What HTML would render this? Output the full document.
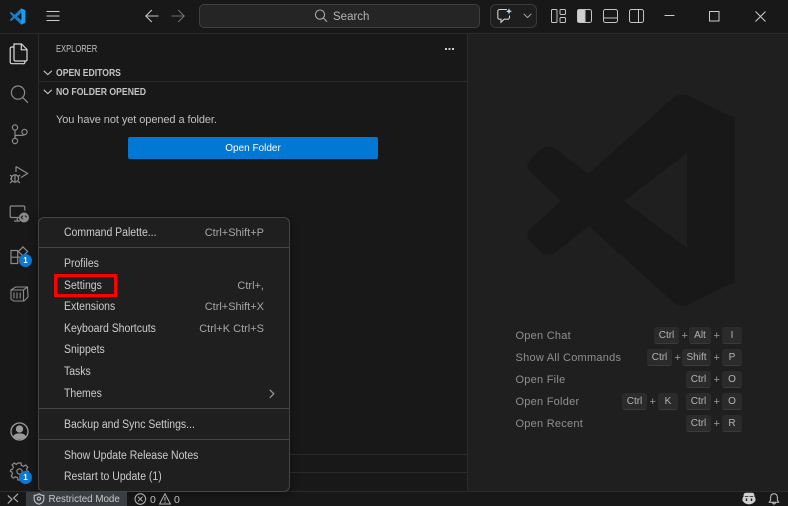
<!DOCTYPE html>
<html><head><meta charset="utf-8"><style>
html,body{margin:0;padding:0;width:788px;height:506px;overflow:hidden;background:#181818}
body{position:relative;font-family:"Liberation Sans",sans-serif;font-size:11.5px;color:#ccc}
.a{position:absolute;white-space:nowrap}
.h{transform-origin:left center}
.m{position:absolute;white-space:nowrap;left:64px;color:#cccccc;font-size:11.5px;line-height:14px;transform:scaleX(.91);transform-origin:left center;margin-top:1px}
.k{position:absolute;white-space:nowrap;right:524px;color:#a6a6a6;font-size:11px;line-height:14px;margin-top:1px}
.s{position:absolute;left:39px;width:251px;height:1px;background:#454545}
.w{position:absolute;left:515.5px;color:#8f8f8f;font-size:11px;line-height:14px;letter-spacing:.25px;white-space:nowrap;margin-top:1px}
.c{position:absolute;height:16px;line-height:18px;background:#2b2b2b;border-bottom:1px solid #3a3a3a;border-radius:3px;color:#b5b5b5;font-size:10px;text-align:center}
.p{position:absolute;color:#999;font-size:11px;line-height:18px}
svg{position:absolute;overflow:visible}
.b{position:absolute;width:13px;height:13px;border-radius:50%;background:#0a78d4;color:#fff;font-size:8px;font-weight:bold;line-height:13px;text-align:center}
</style></head><body>
<!-- regions -->
<div class="a" style="left:468px;top:34px;width:320px;height:457px;background:#1f1f1f"></div>
<div class="a" style="left:0;top:33px;width:788px;height:1px;background:#2b2b2b"></div>
<div class="a" style="left:38px;top:34px;width:1px;height:457px;background:#2b2b2b"></div>
<div class="a" style="left:467px;top:34px;width:1px;height:457px;background:#2b2b2b"></div>
<div class="a" style="left:39px;top:81px;width:428px;height:1px;background:#2b2b2b"></div>
<div class="a" style="left:290px;top:454px;width:177px;height:1px;background:#2b2b2b"></div>
<div class="a" style="left:290px;top:472px;width:177px;height:1px;background:#2b2b2b"></div>
<div class="a" style="left:0;top:491px;width:788px;height:1px;background:#2b2b2b"></div>

<!-- title bar -->
<svg style="left:9px;top:8px" width="17" height="17" viewBox="0 0 17 17"><path d="M12.2 .4 16.3 2.3V14.7L12.2 16.6 5.6 10.3 2.2 13 .6 12.1 3.9 8.5.6 4.9 2.2 4 5.6 6.7Z" fill="#0e82d2"/><path d="M12.2 .4 16.3 2.3V14.7L12.2 16.6Z" fill="#1f9cf0"/><path d="M12.4 4.9 8 8.5l4.4 3.6Z" fill="#181818"/></svg>
<svg style="left:46px;top:10px" width="14" height="12" fill="none" stroke="#ccc" stroke-width="1"><path d="M.5 1.5h13M.5 6h13M.5 10.5h13"/></svg>
<svg style="left:145px;top:9px" width="14" height="14" fill="none" stroke="#c4c4c4" stroke-width="1.1"><path d="M.8 7H13.5M6.8 1 .8 7l6 6"/></svg>
<svg style="left:171px;top:9px" width="14" height="14" fill="none" stroke="#6e6e6e" stroke-width="1.1"><path d="M13.2 7H.5M7.2 1l6 6-6 6"/></svg>
<div class="a" style="left:199px;top:4px;width:279px;height:22px;background:#252525;border:1px solid #3f3f3f;border-radius:5px"></div>
<svg style="left:314px;top:9px" width="14" height="14" fill="none" stroke="#aaa" stroke-width="1.1"><circle cx="6" cy="5.6" r="4.6"/><path d="M9.4 9 13 12.8"/></svg>
<div class="a" style="left:333px;top:9px;font-size:11.5px;line-height:16px;color:#b5b5b5">Search</div>
<div class="a" style="left:490px;top:4px;width:45px;height:22px;border:1px solid #3a3a3a;border-radius:6px;background:#1e1e1e"></div>
<svg style="left:496px;top:8px" width="18" height="16" fill="none" stroke="#d0d0d0" stroke-width="1.1"><path d="M11 1.5H3.5A1.7 1.7 0 0 0 1.8 3.2V9.5A1.7 1.7 0 0 0 3.5 11.2H5V14.2L8.3 11.2H11A2 2 0 0 0 13.5 9.5V7.5"/><path d="M13 .3 13.9 2.4 16 3.3 13.9 4.2 13 6.3 12.1 4.2 10 3.3 12.1 2.4Z" fill="#b8d8f0" stroke="none"/></svg>
<svg style="left:523px;top:13px" width="9" height="6" fill="none" stroke="#aaa" stroke-width="1"><path d="M.7.8 4.5 4.6 8.3.8"/></svg>
<svg style="left:551px;top:9px" width="15" height="14" fill="none" stroke="#c4c4c4" stroke-width="1"><rect x=".5" y=".5" width="5.5" height="13" rx="1"/><rect x="9" y=".5" width="5.5" height="5" rx="1"/><rect x="9" y="8.5" width="5.5" height="5" rx="1"/></svg>
<svg style="left:577px;top:9px" width="15" height="14" fill="none" stroke="#c4c4c4" stroke-width="1"><rect x=".5" y=".5" width="14" height="13" rx="2"/><path d="M.5 2.5a2 2 0 0 1 2-2H8v13H2.5a2 2 0 0 1-2-2Z" fill="#d0d0d0"/></svg>
<svg style="left:603px;top:9px" width="15" height="14" fill="none" stroke="#c4c4c4" stroke-width="1"><rect x=".5" y=".5" width="14" height="13" rx="2"/><path d="M.5 9h14"/></svg>
<svg style="left:629px;top:9px" width="15" height="14" fill="none" stroke="#c4c4c4" stroke-width="1"><rect x=".5" y=".5" width="14" height="13" rx="2"/><path d="M9.5.5v13"/></svg>
<svg style="left:664px;top:15px" width="11" height="2" stroke="#ccc" stroke-width="1"><path d="M.5 .5h10"/></svg>
<svg style="left:709px;top:11px" width="11" height="11" fill="none" stroke="#ccc" stroke-width="1"><rect x=".5" y=".5" width="9.5" height="9.5"/></svg>
<svg style="left:755px;top:11px" width="11" height="11" fill="none" stroke="#ccc" stroke-width="1"><path d="M.5.5 10.5 10.5M10.5.5 .5 10.5"/></svg>

<!-- activity bar -->
<svg style="left:9px;top:43px" width="20" height="22" fill="none" stroke="#d8d8d8" stroke-width="1.2"><path d="M5 1H12.5L18 6.5V16.5A1.3 1.3 0 0 1 16.7 18H6.3A1.3 1.3 0 0 1 5 16.5Z"/><path d="M12.3 1V6.8H18"/><path d="M5 4H2.7A1.5 1.5 0 0 0 1.2 5.5V19A1.7 1.7 0 0 0 2.9 20.7H14A1.5 1.5 0 0 0 15.5 18.2"/></svg>
<svg style="left:10px;top:85px" width="19" height="19" fill="none" stroke="#8b8b8b" stroke-width="1.2"><circle cx="8" cy="7.6" r="6.6"/><path d="M12.6 12.4 18 17.8"/></svg>
<svg style="left:11px;top:124px" width="17" height="20" fill="none" stroke="#8b8b8b" stroke-width="1.2"><circle cx="4" cy="3.5" r="2.6"/><circle cx="4" cy="17" r="2.6"/><circle cx="13.5" cy="8" r="2.6"/><path d="M4 6V14.4M4 12.5C4 10 12.5 12.5 13.5 10.6"/></svg>
<svg style="left:9px;top:165px" width="20" height="21" fill="none" stroke="#8b8b8b" stroke-width="1.2"><path d="M7 1.5V7M7 1.5 18.5 8.5 12 12.5"/><circle cx="6" cy="13.5" r="3.6"/><path d="M1 10l2 1.6M1 14h1.5M1 18l2-1.6M11 10l-2 1.6M11 18l-2-1.6M6 10V17"/></svg>
<svg style="left:9px;top:205px" width="21" height="20" fill="none" stroke="#8b8b8b" stroke-width="1.2"><path d="M12 12.5H2.5A1.3 1.3 0 0 1 1.2 11.2V2.3A1.3 1.3 0 0 1 2.5 1H14.5A1.3 1.3 0 0 1 15.8 2.3V5.5M5 16H11M8.3 12.5V16"/><circle cx="15" cy="12.5" r="5" fill="#8b8b8b" stroke="none"/><path d="M14 10.6 12.2 12.4 14 14.2M16 10.6 17.8 12.4" stroke="#181818" stroke-width="1"/></svg>
<svg style="left:10px;top:246px" width="19" height="18" fill="none" stroke="#8b8b8b" stroke-width="1.2"><path d="M1 4.5H7.7V11.2H1ZM1 11.2H7.7V17.5H1ZM7.7 11.2H14V15"/><path d="M13 .9 17.6 5.5 13 10.1 8.4 5.5Z"/></svg>
<div class="b" style="left:19px;top:254px">1</div>
<svg style="left:10px;top:286px" width="19" height="16" fill="none" stroke="#8b8b8b" stroke-width="1.1"><path d="M1 4 5.5 1H17.5L18 11 14 15H3.5L1 13ZM1 4H13.5V15M13.5 4 17.5 1M4 6.5V12.5M7 6.5V12.5M10.2 6.5V12.5"/></svg>
<svg style="left:10px;top:422px" width="19" height="19" fill="none" stroke="#9a9a9a" stroke-width="1.3"><circle cx="9.5" cy="9.5" r="8.5"/><circle cx="9.5" cy="7" r="3" fill="#9a9a9a"/><path d="M3.8 14.5C5 11.2 14 11.2 15.2 14.5 13 17.2 6 17.2 3.8 14.5Z" fill="#9a9a9a"/></svg>
<svg style="left:10px;top:462px" width="19" height="19" fill="none" stroke="#8b8b8b" stroke-width="1.2"><path d="M8 1H11L11.5 3.4 13.6 4.3 15.7 3 17.8 5.1 16.5 7.2 17.4 9.3 18.5 9.5V11L16.5 12 15.6 14 17 16 15 18 12.8 16.7 11 17.5 10.5 18H8L7.5 15.7 5.4 14.8 3.3 16.1 1.2 14 2.5 11.9 1.6 9.8 0.5 9.5V8L2.5 7.2 3.4 5.1 2.1 3 4.2 1 6.2 2.4 7.5 1.5Z"/><circle cx="9.5" cy="9.5" r="2.6"/></svg>
<div class="b" style="left:19px;top:471px">1</div>

<!-- sidebar -->
<div class="a h" style="left:56px;top:43px;font-size:10.5px;line-height:13px;color:#c0c0c0;transform:scaleX(.72)">EXPLORER</div>
<div class="a" style="left:445px;top:47.5px;width:2px;height:2px;background:#ccc;box-shadow:3.5px 0 #ccc,7px 0 #ccc"></div>
<svg style="left:43px;top:70px" width="10" height="6" fill="none" stroke="#c4c4c4" stroke-width="1.1"><path d="M.8.8 4.8 4.6 8.8.8"/></svg>
<div class="a h" style="left:56px;top:67px;font-size:10.5px;font-weight:bold;line-height:13px;color:#c4c4c4;transform:scaleX(.82)">OPEN EDITORS</div>
<svg style="left:43px;top:89px" width="10" height="6" fill="none" stroke="#c4c4c4" stroke-width="1.1"><path d="M.8.8 4.8 4.6 8.8.8"/></svg>
<div class="a h" style="left:56px;top:86px;font-size:10.5px;font-weight:bold;line-height:13px;color:#c4c4c4;transform:scaleX(.825)">NO FOLDER OPENED</div>
<div class="a" style="left:56px;top:113px;font-size:11px;line-height:14px;color:#c0c0c0;letter-spacing:-.08px">You have not yet opened a folder.</div>
<div class="a" style="left:128px;top:137px;width:250px;height:22px;line-height:24px;background:#0078d4;border-radius:2px;color:#fff;font-size:10px;text-align:center">Open Folder</div>

<!-- watermark -->
<svg style="left:0;top:0" width="788" height="506"><path d="M674 97Q683 92 691 97L735 118V282L691 303Q683 309 674 303L589 226 556 252Q548 257 541 252L530 241Q525 235 530 229L561 201 530 172Q525 166 530 160L541 149Q548 144 556 149L588 174Z" fill="#181818"/><path d="M687 153 624 201 687 248Z" fill="#1f1f1f"/></svg>
<div class="w" style="top:328px">Open Chat</div>
<div class="w" style="top:350px">Show All Commands</div>
<div class="w" style="top:372px">Open File</div>
<div class="w" style="top:394px">Open Folder</div>
<div class="w" style="top:416px">Open Recent</div>
<div class="c" style="left:654px;top:327px;width:25px">Ctrl</div><div class="p" style="left:681.5px;top:327px">+</div><div class="c" style="left:689px;top:327px;width:22px">Alt</div><div class="p" style="left:713.5px;top:327px">+</div><div class="c" style="left:722px;top:327px;width:20px">I</div>
<div class="c" style="left:647px;top:349px;width:25px">Ctrl</div><div class="p" style="left:674.5px;top:349px">+</div><div class="c" style="left:682px;top:349px;width:29px">Shift</div><div class="p" style="left:713.5px;top:349px">+</div><div class="c" style="left:722px;top:349px;width:20px">P</div>
<div class="c" style="left:686px;top:371px;width:25px">Ctrl</div><div class="p" style="left:713.5px;top:371px">+</div><div class="c" style="left:722px;top:371px;width:20px">O</div>
<div class="c" style="left:622px;top:393px;width:25px">Ctrl</div><div class="p" style="left:649.5px;top:393px">+</div><div class="c" style="left:658px;top:393px;width:20px">K</div><div class="c" style="left:686px;top:393px;width:25px">Ctrl</div><div class="p" style="left:713.5px;top:393px">+</div><div class="c" style="left:722px;top:393px;width:20px">O</div>
<div class="c" style="left:686px;top:415px;width:25px">Ctrl</div><div class="p" style="left:713.5px;top:415px">+</div><div class="c" style="left:722px;top:415px;width:20px">R</div>

<!-- menu -->
<div class="a" style="left:38px;top:217px;width:250px;height:273px;background:#1f1f1f;border:1px solid #454545;border-radius:6px;box-shadow:0 2px 8px rgba(0,0,0,.36)"></div>
<div class="s" style="top:247px"></div><div class="s" style="top:408px"></div><div class="s" style="top:439px"></div>
<div class="m" style="top:225px">Command Palette...</div><div class="k" style="top:225px">Ctrl+Shift+P</div>
<div class="m" style="top:256px">Profiles</div>
<div class="m" style="top:278px">Settings</div><div class="k" style="top:278px">Ctrl+,</div>
<div class="m" style="top:299px">Extensions</div><div class="k" style="top:299px">Ctrl+Shift+X</div>
<div class="m" style="top:321px">Keyboard Shortcuts</div><div class="k" style="top:321px">Ctrl+K Ctrl+S</div>
<div class="m" style="top:342px">Snippets</div>
<div class="m" style="top:364px">Tasks</div>
<div class="m" style="top:386px">Themes</div>
<svg style="left:269px;top:389px" width="6" height="10" fill="none" stroke="#999" stroke-width="1.2"><path d="M.8.8 4.8 4.8.8 8.8"/></svg>
<div class="m" style="top:417px">Backup and Sync Settings...</div>
<div class="m" style="top:448px">Show Update Release Notes</div>
<div class="m" style="top:469px">Restart to Update (1)</div>
<div class="a" style="left:54px;top:274px;width:57px;height:17px;border:3px solid #ff0000"></div>

<!-- status bar -->
<svg style="left:7px;top:493px" width="12" height="12" fill="none" stroke="#b5b5b5" stroke-width="1.1"><path d="M.8 10.5 5 6.3.8 2.5M11 .8 6.6 5 11 9"/></svg>
<div class="a" style="left:26px;top:492px;width:101px;height:14px;background:#3a3d41"></div>
<svg style="left:33px;top:493px" width="12" height="12" fill="none" stroke="#c4c4c4" stroke-width="1.1"><path d="M6 .8C4.5 2 3 2.4 1.2 2.4V6C1.2 8.8 3.5 10.5 6 11.2 8.5 10.5 10.8 8.8 10.8 6V2.4C9 2.4 7.5 2 6 .8Z"/><circle cx="6" cy="5.6" r="1.6"/></svg>
<div class="a" style="left:48.5px;top:493px;font-size:9.8px;line-height:14px;color:#c8c8c8">Restricted Mode</div>
<svg style="left:134px;top:493px" width="12" height="12" fill="none" stroke="#b5b5b5" stroke-width="1"><circle cx="6.3" cy="6" r="5.3"/><path d="M4 3.7 8.6 8.3M8.6 3.7 4 8.3"/></svg>
<div class="a" style="left:150px;top:493px;font-size:10.5px;line-height:14px;color:#c0c0c0">0</div>
<svg style="left:159px;top:493px" width="12" height="12" fill="none" stroke="#b5b5b5" stroke-width="1"><path d="M6 .8 11.4 11H.6ZM6 4.2V7.8M6 8.8V10"/></svg>
<div class="a" style="left:174px;top:493px;font-size:10.5px;line-height:14px;color:#c0c0c0">0</div>
<svg style="left:742px;top:492px" width="14" height="13" fill="#d0d0d0"><path d="M4 .8H10C12 .8 12.6 2.5 12.4 4.5 13.5 5.5 13.7 7 13.5 8.8 11.5 11.5 9 12.4 7 12.4 5 12.4 2.5 11.5.5 8.8.3 7 .5 5.5 1.6 4.5 1.4 2.5 2 .8 4 .8Z"/><path d="M4.5 6.5V9M9.5 6.5V9" stroke="#181818" stroke-width="1.4"/><path d="M2.8 4.6H6.4M7.6 4.6H11.2" stroke="#181818" stroke-width=".8"/></svg>
<svg style="left:768px;top:493px" width="12" height="12" fill="none" stroke="#c4c4c4" stroke-width="1"><path d="M6 .7C3.5.7 2.6 2.6 2.6 4.6V7L1.3 9.3H10.7L9.4 7V4.6C9.4 2.6 8.5.7 6 .7ZM4.6 9.4C4.6 11.5 7.4 11.5 7.4 9.4"/></svg>
</body></html>
